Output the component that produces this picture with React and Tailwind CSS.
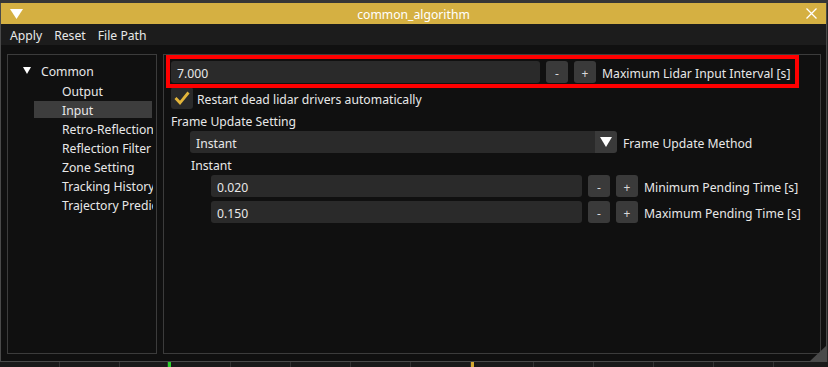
import React from "react";

const font = { fontFamily: '"Noto Sans", "Open Sans", sans-serif' };

function T({ children, className = "" }) {
  return <span className={`relative top-[2px] whitespace-nowrap ${className}`}>{children}</span>;
}

function NumRow({ value, label, inputW }) {
  return (
    <div className="flex h-[22px] items-center">
      <div className={`${inputW} h-[22px] rounded-[3px] bg-[#2a2a2a] pl-[6px] flex items-center`}><T>{value}</T></div>
      <div className="ml-[6px] w-[22px] h-[22px] rounded-[3px] bg-[#3a3a3a] flex items-center justify-center text-[12px] text-[#d8d8d8]"><T>-</T></div>
      <div className="ml-[6px] w-[22px] h-[22px] rounded-[3px] bg-[#3a3a3a] flex items-center justify-center text-[12px] text-[#d8d8d8]"><T>+</T></div>
      <div className="ml-[6px] flex items-center"><T>{label}</T></div>
    </div>
  );
}

export default function App() {
  const tree = ["Output", "Input", "Retro-Reflection", "Reflection Filter", "Zone Setting", "Tracking History", "Trajectory Prediction"];
  return (
    <div className="w-[828px] h-[367px] bg-[#262626] overflow-hidden relative text-[12.2px] text-[#e8e8e8] leading-none" style={font}>
      <div className="h-[3px] bg-[#363636]" />
      <div className="w-[827px] h-[359px] border-l border-r border-b border-[#4a4a4a] flex flex-col relative">
        {/* title bar */}
        <div className="h-[21px] bg-[#d5b042] flex items-center relative">
          <svg className="ml-[9px]" width="13" height="10" viewBox="0 0 13 10">
            <polygon points="0,0 13,0 6.5,10" fill="#ffffff" />
          </svg>
          <div className="absolute inset-0 flex items-center justify-center text-white"><T>common_algorithm</T></div>
          <svg className="ml-auto mr-[9px]" width="11" height="11" viewBox="0 0 11 11">
            <path d="M0.5 0.5 L10.5 10.5 M10.5 0.5 L0.5 10.5" stroke="#ffffff" strokeWidth="1.3" />
          </svg>
        </div>
        {/* menu bar */}
        <div className="h-[21px] bg-[#1c1c1c] flex items-center pl-[9px] gap-[12px]">
          <T>Apply</T>
          <T>Reset</T>
          <T>File Path</T>
        </div>
        {/* body */}
        <div className="flex-1 bg-[#101010] pt-[9px] pl-[6px] flex gap-[6px]">
          {/* left panel */}
          <div className="w-[150px] h-[300px] border border-[#3c3c3c] overflow-hidden">
            <div className="w-[145px] overflow-hidden pt-[6px]">
              <div className="h-[19px] flex items-center">
                <svg className="ml-[15px]" width="8" height="7" viewBox="0 0 8 7">
                  <polygon points="0,0 8,0 4,7" fill="#ffffff" />
                </svg>
                <T className="ml-[10px]">Common</T>
              </div>
              {tree.map((t) => (
                <div key={t} className="h-[19px] flex items-center">
                  <div className={`ml-[26px] w-[118px] h-[17px] mt-[1px] flex items-center pl-[28px] ${t === "Input" ? "bg-[#3d3d3d]" : ""}`}>
                    <T>{t}</T>
                  </div>
                </div>
              ))}
            </div>
          </div>
          {/* right panel */}
          <div className="w-[658px] h-[300px] border border-[#3c3c3c] pt-[6px] pl-[7px] flex flex-col gap-[4px]">
            <div className="relative">
              <div className="absolute left-[-5px] top-[-6px] w-[633px] h-[33px] border-[4px] border-[#ff0000]" />
              <NumRow value="7.000" label="Maximum Lidar Input Interval [s]" inputW="w-[369px]" />
            </div>
            <div className="flex h-[22px] items-center">
              <div className="w-[22px] h-[22px] rounded-[3px] bg-[#2a2a2a] flex items-center justify-center">
                <svg width="16" height="14" viewBox="0 0 16 14">
                  <path d="M1.5 7 L6 11.8 L14.5 1.5" stroke="#e3b53a" strokeWidth="2.8" fill="none" />
                </svg>
              </div>
              <T className="ml-[4px]">Restart dead lidar drivers automatically</T>
            </div>
            <div className="h-[14px] flex items-center"><T>Frame Update Setting</T></div>
            <div className="flex h-[22px] items-center ml-[19px]">
              <div className="w-[405px] h-[22px] rounded-l-[3px] bg-[#2a2a2a] flex items-center pl-[6px]"><T>Instant</T></div>
              <div className="w-[22px] h-[22px] rounded-r-[3px] bg-[#3a3a3a] flex items-center justify-center">
                <svg width="12" height="10" viewBox="0 0 12 10">
                  <polygon points="0,0 12,0 6,10" fill="#ffffff" />
                </svg>
              </div>
              <T className="ml-[6px]">Frame Update Method</T>
            </div>
            <div className="h-[14px] flex items-center ml-[20px]"><T>Instant</T></div>
            <div className="ml-[40px] flex flex-col gap-[4px]">
              <NumRow value="0.020" label="Minimum Pending Time [s]" inputW="w-[371px]" />
              <NumRow value="0.150" label="Maximum Pending Time [s]" inputW="w-[371px]" />
            </div>
          </div>
        </div>
        {/* resize grip */}
        <svg className="absolute right-0 bottom-0" width="16" height="15" viewBox="0 0 16 15">
          <polygon points="16,0 16,15 0,15" fill="#4a4a4a" />
        </svg>
      </div>
      {/* background strip below */}
      <div className="h-[5px] bg-[#1a1a1a] flex">
        <div className="w-[60px] border-r border-[#333]" />
        <div className="w-[60px] border-r border-[#333]" />
        <div className="w-[48px] border-r border-[#333]" />
        <div className="w-[3px] bg-[#2bd12b]" />
        <div className="w-[60px] border-r border-[#333]" />
        <div className="w-[60px] border-r border-[#333]" />
        <div className="w-[60px] border-r border-[#333]" />
        <div className="w-[60px] border-r border-[#333]" />
        <div className="w-[60px] border-r border-[#333]" />
        <div className="w-[3px] bg-[#d5a830]" />
        <div className="w-[60px] border-r border-[#333]" />
        <div className="w-[60px] border-r border-[#333]" />
        <div className="w-[60px] border-r border-[#333]" />
        <div className="w-[60px] border-r border-[#333]" />
        <div className="w-[60px] border-r border-[#333]" />
      </div>
    </div>
  );
}
